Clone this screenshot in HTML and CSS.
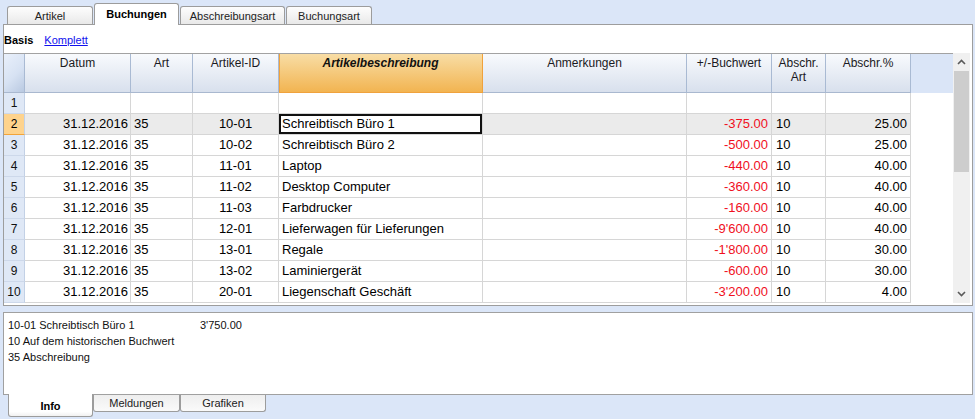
FILE: index.html
```html
<!DOCTYPE html>
<html lang="de">
<head>
<meta charset="utf-8">
<title>Buchungen</title>
<link rel="stylesheet" href="styles.css">
</head>
<body>
<div class="toptabs">
  <div class="tab w1">Artikel</div>
  <div class="tab w2 active">Buchungen</div>
  <div class="tab w3">Abschreibungsart</div>
  <div class="tab w4">Buchungsart</div>
</div>
<div class="panel">
  <div class="views"><span class="view-cur">Basis</span><a class="view-link" href="#">Komplett</a></div>
  <div class="gridarea">
    <div class="grid">
      <div class="row head">
        <div class="c rn corner"></div>
        <div class="c">Datum</div>
        <div class="c">Art</div>
        <div class="c">Artikel-ID</div>
        <div class="c sel">Artikelbeschreibung</div>
        <div class="c">Anmerkungen</div>
        <div class="c">+/-Buchwert</div>
        <div class="c">Abschr.<br>Art</div>
        <div class="c">Abschr.%</div>
        <div class="c fill"></div>
      </div>
      <div class="row">
        <div class="c rn">1</div><div class="c r"></div><div class="c l"></div><div class="c m"></div><div class="c l"></div><div class="c l"></div><div class="c r"></div><div class="c l"></div><div class="c r"></div><div class="c fill"></div>
      </div>
      <div class="row current">
        <div class="c rn">2</div><div class="c r">31.12.2016</div><div class="c l">35</div><div class="c m">10-01</div><div class="c l cur">Schreibtisch Büro 1</div><div class="c l"></div><div class="c r neg">-375.00</div><div class="c l">10</div><div class="c r">25.00</div><div class="c fill"></div>
      </div>
      <div class="row">
        <div class="c rn">3</div><div class="c r">31.12.2016</div><div class="c l">35</div><div class="c m">10-02</div><div class="c l">Schreibtisch Büro 2</div><div class="c l"></div><div class="c r neg">-500.00</div><div class="c l">10</div><div class="c r">25.00</div><div class="c fill"></div>
      </div>
      <div class="row">
        <div class="c rn">4</div><div class="c r">31.12.2016</div><div class="c l">35</div><div class="c m">11-01</div><div class="c l">Laptop</div><div class="c l"></div><div class="c r neg">-440.00</div><div class="c l">10</div><div class="c r">40.00</div><div class="c fill"></div>
      </div>
      <div class="row">
        <div class="c rn">5</div><div class="c r">31.12.2016</div><div class="c l">35</div><div class="c m">11-02</div><div class="c l">Desktop Computer</div><div class="c l"></div><div class="c r neg">-360.00</div><div class="c l">10</div><div class="c r">40.00</div><div class="c fill"></div>
      </div>
      <div class="row">
        <div class="c rn">6</div><div class="c r">31.12.2016</div><div class="c l">35</div><div class="c m">11-03</div><div class="c l">Farbdrucker</div><div class="c l"></div><div class="c r neg">-160.00</div><div class="c l">10</div><div class="c r">40.00</div><div class="c fill"></div>
      </div>
      <div class="row">
        <div class="c rn">7</div><div class="c r">31.12.2016</div><div class="c l">35</div><div class="c m">12-01</div><div class="c l">Lieferwagen für Lieferungen</div><div class="c l"></div><div class="c r neg">-9'600.00</div><div class="c l">10</div><div class="c r">40.00</div><div class="c fill"></div>
      </div>
      <div class="row">
        <div class="c rn">8</div><div class="c r">31.12.2016</div><div class="c l">35</div><div class="c m">13-01</div><div class="c l">Regale</div><div class="c l"></div><div class="c r neg">-1'800.00</div><div class="c l">10</div><div class="c r">30.00</div><div class="c fill"></div>
      </div>
      <div class="row">
        <div class="c rn">9</div><div class="c r">31.12.2016</div><div class="c l">35</div><div class="c m">13-02</div><div class="c l">Laminiergerät</div><div class="c l"></div><div class="c r neg">-600.00</div><div class="c l">10</div><div class="c r">30.00</div><div class="c fill"></div>
      </div>
      <div class="row">
        <div class="c rn">10</div><div class="c r">31.12.2016</div><div class="c l">35</div><div class="c m">20-01</div><div class="c l">Liegenschaft Geschäft</div><div class="c l"></div><div class="c r neg">-3'200.00</div><div class="c l">10</div><div class="c r">4.00</div><div class="c fill"></div>
      </div>
    </div>
    <div class="vscroll">
      <div class="sbtn"><svg width="9" height="6" viewBox="0 0 9 6"><polyline points="1,5 4.5,1.5 8,5" fill="none" stroke="#5a5a5a" stroke-width="1.6"/></svg></div>
      <div class="thumb"></div>
      <div class="track"></div>
      <div class="sbtn"><svg width="9" height="6" viewBox="0 0 9 6"><polyline points="1,1 4.5,4.5 8,1" fill="none" stroke="#5a5a5a" stroke-width="1.6"/></svg></div>
    </div>
  </div>
</div>
<div class="info">
  <div class="info-line"><span class="info-k">10-01 Schreibtisch Büro 1</span><span>3'750.00</span></div>
  <div class="info-line">10 Auf dem historischen Buchwert</div>
  <div class="info-line">35 Abschreibung</div>
</div>
<div class="bottabs">
  <div class="btab b1 active">Info</div>
  <div class="btab b2">Meldungen</div>
  <div class="btab b3">Grafiken</div>
</div>
</body>
</html>
```
FILE: styles.css
```css
html, body {
  margin: 0;
  padding: 0;
}
body {
  width: 975px;
  height: 419px;
  overflow: hidden;
  background: #dbe6f8;
  font-family: "Liberation Sans", Arial, sans-serif;
  color: #000;
}

/* top tabs */
.toptabs {
  display: flex;
  align-items: flex-end;
  gap: 1px;
  height: 24px;
  padding-left: 7px;
}
.tab {
  box-sizing: border-box;
  height: 18px;
  border: 1px solid #9c9c9c;
  border-bottom: none;
  border-radius: 3px 3px 0 0;
  background: linear-gradient(#fdfdfd, #e9e9e9);
  font-size: 11px;
  color: #222;
  display: flex;
  align-items: center;
  justify-content: center;
}
.tab.active {
  height: 22px;
  margin-bottom: -1px;
  background: #fff;
  font-weight: bold;
  color: #000;
  position: relative;
  z-index: 1;
  padding-bottom: 1px;
}
.w1 { width: 86px; }
.w2 { width: 85px; }
.w3 { width: 105px; }
.w4 { width: 86px; }

/* main panel */
.panel {
  box-sizing: border-box;
  margin-left: 3px;
  width: 970px;
  height: 282px;
  border: 1px solid #9d9d9d;
  background: #fff;
}
.views {
  height: 28px;
  box-sizing: border-box;
  padding-top: 2px;
  display: flex;
  align-items: center;
  gap: 11px;
  font-size: 11px;
}
.view-cur { font-weight: bold; }
.view-link { color: #1010ee; text-decoration: underline; }

.gridarea {
  display: flex;
}
.grid {
  width: 949px;
  border-top: 1px solid #a2a2a2;
}
.row {
  display: grid;
  grid-template-columns: 21px 106px 62px 86px 204px 204px 85px 54px 85px 42px;
  height: 21px;
}
.c {
  box-sizing: border-box;
  border-right: 1px solid #d6d6d6;
  border-bottom: 1px solid #d6d6d6;
  font-size: 13px;
  line-height: 20px;
  white-space: nowrap;
  overflow: hidden;
}
.c.r { text-align: right; padding-right: 2px; }
.c.l { padding-left: 3px; }
.c.m { text-align: center; }
.c.neg { color: #f0101e; padding-right: 3px; }
.row .c:nth-child(9).r { padding-right: 3px; }
.row .c:nth-child(8).l { padding-left: 4px; }
.c.fill { border: none; background: #fff; }

.c.rn {
  background: #dfe8f6;
  border-right: 1px solid #c3d1e6;
  border-bottom: 1px solid #cdd8ea;
  text-align: center;
  font-size: 12px;
  color: #111;
}

/* header */
.row.head { height: 39px; }
.head .c {
  background: linear-gradient(#f8fafd, #d8e0ed);
  border-right: 1px solid #a9bad3;
  border-bottom: 1px solid #a9b8cf;
  font-size: 12px;
  line-height: 14px;
  padding-top: 2px;
  text-align: center;
  color: #1a1a22;
}
.head .c.corner {
  background: linear-gradient(135deg, #e9f0fb 0%, #d7e2f3 55%, #b9c9e1 100%);
  border-right: 1px solid #a9bad3;
}
.head .c.sel {
  background: linear-gradient(#f8dda5, #f2b451);
  border-right: 1px solid #f0a23c;
  border-bottom: 1px solid #f0a23c;
  box-shadow: inset 1px 0 0 #f0a23c;
  font-weight: bold;
  font-style: italic;
  color: #111;
}
.head .c.fill {
  background: #dae5f7;
  border: none;
}

/* current row */
.current .c { background: #ebebeb; }
.current .c.rn {
  background: #fed38d;
  border-bottom: 1px solid #f2a43a;
  color: #000;
}
.current .c.fill { background: #fff; }
.current .c.cur {
  background: #fff;
  box-shadow: inset 0 0 0 2px #111;
}

/* vertical scrollbar */
.vscroll {
  width: 17px;
  height: 250px;
  background: #f0f0f0;
  display: flex;
  flex-direction: column;
}
.sbtn {
  height: 18px;
  display: flex;
  align-items: center;
  justify-content: center;
}
.thumb {
  height: 101px;
  margin: 0 1px;
  background: #cdcdcd;
}
.track { flex: 1; }

/* info panel */
.info {
  box-sizing: border-box;
  margin: 6px 0 0 3px;
  width: 970px;
  height: 83px;
  border: 1px solid #a0a0a0;
  background: #fff;
  padding: 4px 0 0 4px;
  font-size: 11px;
  line-height: 16px;
  color: #111;
}
.info-k {
  display: inline-block;
  width: 192px;
}

/* bottom tabs */
.bottabs {
  display: flex;
  align-items: flex-start;
  padding-left: 8px;
  margin-top: -1px;
}
.btab {
  box-sizing: border-box;
  margin-top: 1px;
  height: 17px;
  border: 1px solid #9c9c9c;
  border-top: none;
  border-radius: 0 0 3px 3px;
  background: linear-gradient(#eeeeee, #fafafa);
  font-size: 11px;
  color: #222;
  display: flex;
  align-items: center;
  justify-content: center;
}
.btab.active {
  margin-top: 0;
  height: 23px;
  background: linear-gradient(#ffffff 80%, #f1f1f1);
  font-weight: bold;
  color: #000;
  position: relative;
  z-index: 1;
  padding-top: 1px;
}
.b1 { width: 85px; }
.b2 { width: 87px; }
.b3 { width: 86px; }
```
